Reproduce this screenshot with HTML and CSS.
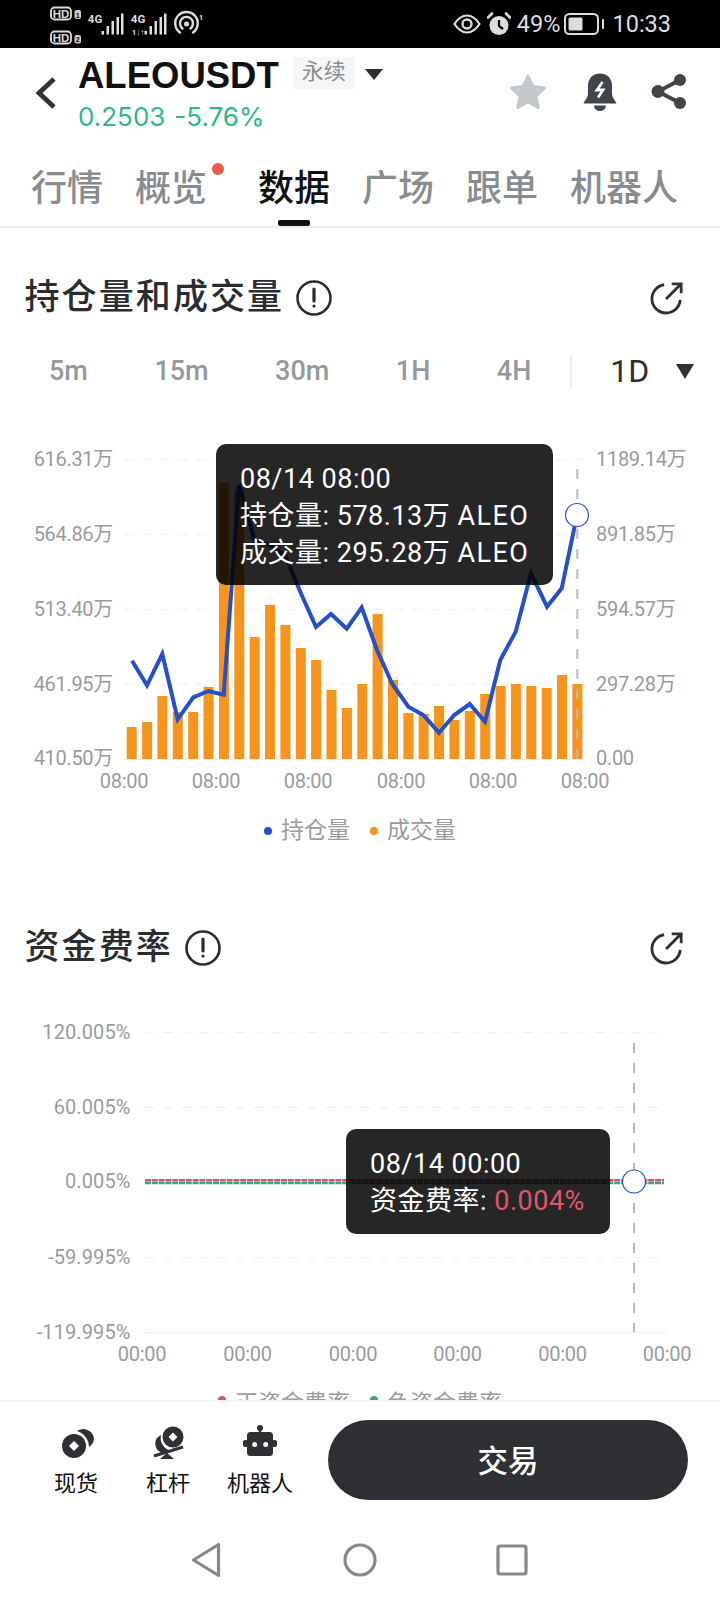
FILE: index.html
```html
<!DOCTYPE html>
<html lang="zh">
<head>
<meta charset="utf-8">
<title>ALEOUSDT</title>
<link rel="stylesheet" href="styles.css">
</head>
<body>
<div class="page">
  <div class="status">
    <svg class="status-left" viewBox="0 0 210 48" width="210" height="48">
      <rect class="hd-box" x="51" y="7.5" width="20" height="12" rx="3.5"/>
      <text class="hd" x="61" y="17.7">HD</text>
      <rect class="sim" x="74.5" y="10" width="6.5" height="9" rx="2"/>
      <text class="sim-n" x="77.7" y="17.5">1</text>
      <rect class="hd-box" x="51" y="31.5" width="20" height="12" rx="3.5"/>
      <text class="hd" x="61" y="41.7">HD</text>
      <rect class="sim" x="74.5" y="35" width="6.5" height="8.5" rx="2"/>
      <text class="sim-n" x="77.7" y="42">2</text>
      <text class="net" x="95" y="23">4G</text>
      <rect class="sig" x="101.500" y="31" width="2.500" height="3.500"/>
      <rect class="sig" x="106.500" y="26" width="2.500" height="8.500"/>
      <rect class="sig" x="111.500" y="21" width="2.500" height="13.500"/>
      <rect class="sig" x="116.500" y="17" width="2.500" height="17.500"/>
      <rect class="sig" x="121" y="13.500" width="2.500" height="21"/>
      <text class="net" x="138" y="23">4G</text>
      <text class="net-s" x="138" y="34.500">1↓↑</text>
      <rect class="sig" x="144.500" y="31" width="2.500" height="3.500"/>
      <rect class="sig" x="149.500" y="26" width="2.500" height="8.500"/>
      <rect class="sig" x="154.500" y="21" width="2.500" height="13.500"/>
      <rect class="sig" x="159.500" y="17" width="2.500" height="17.500"/>
      <rect class="sig" x="164" y="13.500" width="2.500" height="21"/>
      <path class="arc" d="M180 32.500 A11.300 11.300 0 1 1 193 32.500"/>
      <path class="arc" d="M182.500 28.500 A6.500 6.500 0 1 1 190.500 28.500"/>
      <circle class="sig" cx="186.500" cy="24" r="2.500"/>
      <text class="net-s" x="201" y="20">1</text>
    </svg>
    <div class="status-right">
      <svg class="st-eye" viewBox="0 0 28 20" width="28" height="20">
        <path class="eye" d="M1.500 10 C6 3 10 1.500 14 1.500 C18 1.500 22 3 26.500 10 C22 17 18 18.500 14 18.500 C10 18.500 6 17 1.500 10 Z"/>
        <circle class="eye-ring" cx="14" cy="10" r="4.500"/>
      </svg>
      <svg class="st-alarm" viewBox="0 0 24 24" width="24" height="24">
        <circle class="alarm" cx="12" cy="13.500" r="9.500"/>
        <path class="alarm-hand" d="M12 8 V14 L16 17"/>
        <path class="alarm-ear" d="M1 5.500 L5 1.500 M23 5.500 L19 1.500"/>
      </svg>
      <span class="st-pct">49%</span>
      <svg class="st-batt" viewBox="0 0 42 22" width="42" height="22">
        <rect class="batt" x="1" y="1" width="33" height="20" rx="4.500"/>
        <rect class="batt-fill" x="4.500" y="4.500" width="14" height="13" rx="1.500"/>
        <rect class="batt-fill" x="38" y="6" width="2" height="10" rx="1"/>
      </svg>
      <span class="st-time">10:33</span>
    </div>
  </div>

  <main class="main">
    <header class="header">
      <svg class="back" viewBox="0 0 24 34" width="24" height="34"><path d="M20 3 L5 17 L20 31"/></svg>
      <div class="sym">
        <div class="sym-top">
          <span class="sym-name">ALEOUSDT</span>
          <span class="badge">永续</span>
          <span class="caret-sm"></span>
        </div>
        <div class="sym-price"><span>0.2503</span><span>-5.76%</span></div>
      </div>
      <div class="actions">
        <svg class="a-star" viewBox="0 0 40 38" width="40" height="38"><path d="M20 3 L25 13.500 L36.500 15 L28 23 L30.200 34.500 L20 29 L9.800 34.500 L12 23 L3.500 15 L15 13.500 Z"/></svg>
        <svg class="a-bell" viewBox="0 0 34 38" width="34" height="38">
          <path class="bell" d="M17 0.500 C9 0.500 5 6.500 5 13 V20 C5 25 2 27 0.500 30.500 H33.500 C32 27 29 25 29 20 V13 C29 6.500 25 0.500 17 0.500 Z"/>
          <path class="bell" d="M11 32.500 H23 A6 5.500 0 0 1 11 32.500 Z"/>
          <path class="bolt" d="M19.500 9 L14 17 H20 L15 24.500"/>
        </svg>
        <svg class="a-share" viewBox="0 0 36 38" width="36" height="38">
          <path class="share-l" d="M29 7 L7 18.500 L29 30"/>
          <circle class="share-c" cx="29" cy="7" r="6"/>
          <circle class="share-c" cx="7" cy="18.500" r="6.500"/>
          <circle class="share-c" cx="29" cy="30" r="6"/>
        </svg>
      </div>
    </header>

    <nav class="tabs">
      <span class="tab">行情</span>
      <span class="tab tab-dot">概览</span>
      <span class="tab tab-on">数据</span>
      <span class="tab">广场</span>
      <span class="tab">跟单</span>
      <span class="tab">机器人</span>
    </nav>

    <section class="sec-one">
      <div class="sec-title">
        <h2>持仓量和成交量</h2>
        <svg class="info" viewBox="0 0 38 38" width="38" height="38"><circle cx="19" cy="19" r="16.500"/><path d="M19 10 V22"/><path class="info-dot" d="M19 27 V27.100"/></svg>
        <svg class="ext" viewBox="0 0 36 36" width="34" height="34"><path d="M15 4 A15 15 0 1 0 32 20"/><path d="M17 19 L32 4 M23 3 H33 V13"/></svg>
      </div>
      <div class="times">
        <span>5m</span><span>15m</span><span>30m</span><span>1H</span><span>4H</span>
        <i class="t-sep"></i>
        <span class="t-on">1D</span>
        <i class="t-caret"></i>
      </div>
      <div class="chart chart-a">
        <svg class="plot-a" viewBox="0 440 720 365" width="720" height="365">
          <path class="grid" d="M124 459.500 H586 M124 534.500 H586 M124 609.500 H586 M124 684.500 H586"/>
          <path class="grid-base" d="M124 759.500 H586"/>
          <g class="bars">
            <rect x="126.700" y="727" width="10" height="32"/>
            <rect x="142.100" y="722" width="10" height="37"/>
            <rect x="157.400" y="696" width="10" height="63"/>
            <rect x="172.800" y="712" width="10" height="47"/>
            <rect x="188.200" y="712" width="10" height="47"/>
            <rect x="203.500" y="687" width="10" height="72"/>
            <rect x="218.900" y="483" width="10" height="276"/>
            <rect x="234.300" y="490" width="10" height="269"/>
            <rect x="249.700" y="637" width="10" height="122"/>
            <rect x="265" y="605" width="10" height="154"/>
            <rect x="280.400" y="625" width="10" height="134"/>
            <rect x="295.800" y="648" width="10" height="111"/>
            <rect x="311.100" y="660" width="10" height="99"/>
            <rect x="326.500" y="690" width="10" height="69"/>
            <rect x="341.900" y="708" width="10" height="51"/>
            <rect x="357.300" y="684" width="10" height="75"/>
            <rect x="372.600" y="614" width="10" height="145"/>
            <rect x="388" y="680" width="10" height="79"/>
            <rect x="403.400" y="713" width="10" height="46"/>
            <rect x="418.700" y="714" width="10" height="45"/>
            <rect x="434.100" y="706" width="10" height="53"/>
            <rect x="449.500" y="720" width="10" height="39"/>
            <rect x="464.800" y="711" width="10" height="48"/>
            <rect x="480.200" y="694" width="10" height="65"/>
            <rect x="495.600" y="686" width="10" height="73"/>
            <rect x="510.900" y="684" width="10" height="75"/>
            <rect x="526.300" y="686" width="10" height="73"/>
            <rect x="541.700" y="688" width="10" height="71"/>
            <rect x="557" y="675" width="10" height="84"/>
            <rect x="572.400" y="684" width="10" height="75"/>
          </g>
          <path class="cross" d="M577.300 469 V759"/>
          <polyline class="oi" points="132,660.700 147,685.300 162.300,654 177.700,719.300 193.300,697.300 208.300,691 223.700,694.700 239,485 254.700,541 270,545 285.400,556 300.800,593 316,627 331,614 346.700,628.700 361.700,607.500 377,650 392.300,684 408.300,706.700 423.300,715 439,732.700 454.300,715 469.700,704 485,721.700 500.300,660 515.700,631.700 531,573.300 547,606.700 561.700,588.300 577,515"/>
          <circle class="marker" cx="577" cy="515" r="11.500"/>
          <text class="lab" x="113" y="459">616.31万</text>
          <text class="lab" x="113" y="534">564.86万</text>
          <text class="lab" x="113" y="609">513.40万</text>
          <text class="lab" x="113" y="684">461.95万</text>
          <text class="lab" x="113" y="758">410.50万</text>
          <text class="lab-r" x="596" y="459">1189.14万</text>
          <text class="lab-r" x="596" y="534">891.85万</text>
          <text class="lab-r" x="596" y="609">594.57万</text>
          <text class="lab-r" x="596" y="684">297.28万</text>
          <text class="lab-r" x="596" y="758">0.00</text>
          <text class="lab-x" x="124" y="781">08:00</text>
          <text class="lab-x" x="216" y="781">08:00</text>
          <text class="lab-x" x="308" y="781">08:00</text>
          <text class="lab-x" x="401" y="781">08:00</text>
          <text class="lab-x" x="493" y="781">08:00</text>
          <text class="lab-x" x="585" y="781">08:00</text>
        </svg>
        <div class="tip tip-a">
          <div>08/14 08:00</div>
          <div>持仓量: 578.13万 <span class="tip-unit">ALEO</span></div>
          <div>成交量: 295.28万 <span class="tip-unit">ALEO</span></div>
        </div>
      </div>
      <div class="legend legend-a">
        <span class="lg"><i class="dot dot-blue"></i>持仓量</span>
        <span class="lg"><i class="dot dot-orange"></i>成交量</span>
      </div>
    </section>

    <section class="sec-two">
      <div class="sec-title">
        <h2>资金费率</h2>
        <svg class="info" viewBox="0 0 38 38" width="38" height="38"><circle cx="19" cy="19" r="16.500"/><path d="M19 10 V22"/><path class="info-dot" d="M19 27 V27.100"/></svg>
        <svg class="ext" viewBox="0 0 36 36" width="34" height="34"><path d="M15 4 A15 15 0 1 0 32 20"/><path d="M17 19 L32 4 M23 3 H33 V13"/></svg>
      </div>
      <div class="chart chart-b">
        <svg class="plot-b" viewBox="0 1010 720 362" width="720" height="362">
          <path class="grid" d="M145 1032.500 H666 M145 1107.500 H666 M145 1257.500 H666"/>
          <path class="grid-base" d="M145 1332.500 H666"/>
          <path class="fr-red" d="M145 1180.300 H664"/>
          <path class="fr-green" d="M145 1183 H664"/>
          <path class="cross" d="M634 1043 V1332"/>
          <circle class="marker" cx="634" cy="1181.500" r="11.500"/>
          <text class="lab-f" x="130.500" y="1032">120.005%</text>
          <text class="lab-f" x="130.500" y="1107">60.005%</text>
          <text class="lab-f" x="130.500" y="1181">0.005%</text>
          <text class="lab-f" x="130.500" y="1257">-59.995%</text>
          <text class="lab-f" x="130.500" y="1332">-119.995%</text>
          <text class="lab-x" x="142" y="1354">00:00</text>
          <text class="lab-x" x="247.500" y="1354">00:00</text>
          <text class="lab-x" x="353" y="1354">00:00</text>
          <text class="lab-x" x="457.500" y="1354">00:00</text>
          <text class="lab-x" x="562.500" y="1354">00:00</text>
          <text class="lab-x" x="667" y="1354">00:00</text>
        </svg>
        <div class="tip tip-b">
          <div>08/14 00:00</div>
          <div>资金费率: <span class="tip-red">0.004%</span></div>
        </div>
      </div>
      <div class="legend legend-b">
        <span class="lg"><i class="dot dot-red"></i>正资金费率</span>
        <span class="lg"><i class="dot dot-green"></i>负资金费率</span>
      </div>
    </section>
  </main>

  <footer class="bottom">
    <div class="bar">
      <div class="act">
        <svg class="act-i" viewBox="56 1424 36 36" width="36" height="36">
          <circle class="ic" cx="72" cy="1446" r="12"/>
          <path class="ic-w" d="M72 1441 L77 1446 L72 1451 L67 1446 Z"/>
          <path class="ic" d="M75 1431 A11 11 0 0 1 92 1438 A11 11 0 0 1 87 1447 A17 17 0 0 0 75 1431 Z"/>
        </svg>
        <span>现货</span>
      </div>
      <div class="act">
        <svg class="act-i" viewBox="150 1424 36 36" width="36" height="36">
          <circle class="ic" cx="173" cy="1437" r="10.500"/>
          <path class="ic-w" d="M173 1432.500 L177.500 1437 L173 1441.500 L168.500 1437 Z"/>
          <path class="ic" d="M161 1435 A9.500 9.500 0 0 0 163 1453 L170 1450.500 A13 13 0 0 1 161 1435 Z"/>
          <path class="ic-l" d="M154 1456 L183 1447"/>
          <path class="ic" d="M167 1453 L160 1459 H174 Z"/>
        </svg>
        <span>杠杆</span>
      </div>
      <div class="act">
        <svg class="act-i" viewBox="242 1424 36 36" width="36" height="36">
          <circle class="ic" cx="260" cy="1428" r="3"/>
          <rect class="ic" x="258.800" y="1428" width="2.400" height="6"/>
          <rect class="ic" x="247" y="1432" width="26" height="24" rx="3.500"/>
          <rect class="ic" x="243" y="1440" width="34" height="7" rx="2"/>
          <circle class="ic-w" cx="254.700" cy="1444.500" r="2.500"/>
          <circle class="ic-w" cx="265.700" cy="1444.500" r="2.500"/>
        </svg>
        <span>机器人</span>
      </div>
      <button class="trade" type="button">交易</button>
    </div>
    <div class="sysnav">
      <svg class="n-back" viewBox="0 0 30 36" width="30" height="36"><path d="M27.500 2.500 V33.500 L2.500 18 Z"/></svg>
      <svg class="n-home" viewBox="0 0 34 34" width="34" height="34"><circle cx="17" cy="17" r="15"/></svg>
      <svg class="n-rec" viewBox="0 0 32 32" width="32" height="32"><rect x="2" y="2" width="28" height="28" rx="2"/></svg>
    </div>
  </footer>
</div>
</body>
</html>
```

FILE: styles.css
```css
* { box-sizing: border-box; }
html, body { margin: 0; padding: 0; background: #fff; }
body { font-family: Roboto, "Noto Sans CJK SC", sans-serif; }
.page { width: 720px; height: 1600px; display: flex; flex-direction: column; overflow: hidden; }

/* status bar */
.status { height: 48px; background: #000; display: flex; justify-content: space-between; flex: none; }
.status-left { display: block; }
.hd-box { fill: none; stroke: #ddd; stroke-width: 1.8; }
.hd { fill: #ddd; font: 700 11.500px "Liberation Sans", sans-serif; text-anchor: middle; }
.sim { fill: #ccc; }
.sim-n { fill: #000; font: 700 7px "Liberation Sans", sans-serif; text-anchor: middle; }
.net { fill: #ddd; font: 700 11.500px Roboto, sans-serif; text-anchor: middle; }
.net-s { fill: #ddd; font: 700 8px Roboto, sans-serif; text-anchor: middle; }
.sig { fill: #ddd; }
.arc { fill: none; stroke: #ddd; stroke-width: 2.4; stroke-linecap: round; }
.status-right { display: flex; align-items: center; padding-right: 49px; color: #ddd; }
.st-eye { margin-right: 6px; }
.st-alarm { margin-right: 6px; }
.st-pct { font-size: 23.500px; margin-right: 4px; }
.st-batt { margin-right: 6px; }
.st-time { font-size: 23.500px; }
.eye { fill: none; stroke: #ddd; stroke-width: 2.2; }
.eye-ring { fill: none; stroke: #ddd; stroke-width: 2.4; }
.alarm { fill: #ddd; }
.alarm-hand { fill: none; stroke: #000; stroke-width: 2.2; }
.alarm-ear { fill: none; stroke: #ddd; stroke-width: 2.6; stroke-linecap: round; }
.batt { fill: none; stroke: #ddd; stroke-width: 2; }
.batt-fill { fill: #ddd; }

.main { flex: 1; min-height: 0; overflow: hidden; }

/* header */
.header { height: 90px; display: flex; align-items: flex-start; padding-left: 34px; }
.back { margin: 28px 20px 0 0; }
.back path { fill: none; stroke: #333; stroke-width: 4.8; }
.sym { display: flex; flex-direction: column; }
.sym-top { display: flex; align-items: center; height: 44px; margin-top: 6px; }
.sym-name { font: 700 36.500px "Liberation Sans", sans-serif; color: #111; }
.badge { margin-left: 14px; height: 32px; width: 62px; background: #f5f6f7; border-radius: 3px; color: #8a8d90; font-size: 22px; line-height: 30px; text-align: center; margin-bottom: 6px; }
.caret-sm { margin: 0 0 4px 10px; width: 0; height: 0; border-left: 9px solid transparent; border-right: 9px solid transparent; border-top: 11px solid #2f3033; }
.sym-price { display: flex; gap: 9px; font: 400 26px Inter, sans-serif; color: #2fb68a; line-height: 34px; margin-top: 2px; }
.actions { margin-left: auto; display: flex; padding: 25px 33px 0 0; }
.a-star { margin-right: 35px; }
.a-star path { fill: #c4c8cb; stroke: #c4c8cb; stroke-width: 3; stroke-linejoin: round; }
.a-bell { margin-right: 34px; }
.bell { fill: #42454a; }
.bolt { fill: none; stroke: #fff; stroke-width: 2.8; }
.share-l { fill: none; stroke: #42454a; stroke-width: 4; }
.share-c { fill: #42454a; }

/* tabs */
.tabs { height: 90px; display: flex; align-items: center; gap: 32px; padding: 14px 0 0 31px; border-bottom: 2px solid #eeeff0; }
.tab { position: relative; font-size: 36px; font-weight: 500; color: #888c8f; line-height: 50px; white-space: nowrap; }
.tab-dot { margin-right: 19px; }
.tab-dot::after { content: ""; position: absolute; left: 77px; top: -1px; width: 12px; height: 12px; border-radius: 50%; background: #ee5a4a; }
.tab-on { color: #111; }
.tab-on::after { content: ""; position: absolute; left: 20px; bottom: -12px; width: 32px; height: 6px; border-radius: 2px; background: #111; }

/* sections */
.sec-title { display: flex; align-items: center; height: 46px; padding: 0 36px 0 24.500px; }
.sec-title h2 { margin: 0; font-size: 35px; font-weight: 500; letter-spacing: 2.100px; color: #2a2c30; line-height: 46px; }
.info { margin-left: 11px; }
.info circle { fill: none; stroke: #2a2c30; stroke-width: 2.6; }
.info path { fill: none; stroke: #2a2c30; stroke-width: 3.2; stroke-linecap: round; }
.ext { margin-left: auto; }
.ext path { fill: none; stroke: #2f3033; stroke-width: 3; }
.sec-one { padding-top: 47px; }
.sec-two { padding-top: 72px; }

.times { height: 50px; margin-top: 25px; display: flex; align-items: center; gap: 66.500px; padding-left: 49px; font-size: 27px; font-weight: 500; color: #95999c; }
.t-sep { width: 2px; height: 32px; background: #eeeff0; margin: 0 -28px; }
.t-on { font-size: 32px; font-weight: 400; color: #2f3033; }
.t-caret { width: 0; height: 0; margin-left: -40px; border-left: 9px solid transparent; border-right: 9px solid transparent; border-top: 15px solid #2f3033; }

.chart { position: relative; }
.chart-a { margin-top: 44px; height: 365px; }
.chart-b { margin-top: 39px; height: 362px; }
.plot-a, .plot-b { display: block; }
.grid { fill: none; stroke: #f0f1f2; stroke-width: 1.2; stroke-dasharray: 10 8; }
.grid-base { fill: none; stroke: #eeeff0; stroke-width: 1.2; }
.bars rect { fill: #f7941d; }
.cross { fill: none; stroke: #bdbdbd; stroke-width: 2; stroke-dasharray: 10 10; }
.oi { fill: none; stroke: #2650c8; stroke-width: 4; stroke-linejoin: miter; }
.marker { fill: #fff; stroke: #2650c8; stroke-width: 1.200; }
.lab, .lab-r, .lab-x, .lab-f { fill: #999b9e; font-size: 20px; dominant-baseline: central; font-family: Roboto, "Noto Sans CJK SC", sans-serif; }
.lab { text-anchor: end; letter-spacing: -0.300px; }
.lab-f { text-anchor: end; letter-spacing: 0.100px; }
.lab-r { text-anchor: start; letter-spacing: -0.300px; }
.lab-x { text-anchor: middle; letter-spacing: -0.300px; }
.fr-red { stroke: #d9536f; stroke-width: 2.500; fill: none; stroke-dasharray: 6 0.8; }
.fr-green { stroke: #3fa37f; stroke-width: 2.500; fill: none; stroke-dasharray: 6 0.8; }

.tip { position: absolute; background: rgba(0, 0, 0, 0.85); border-radius: 10px; color: #fff; font-size: 27px; line-height: 37px; padding: 17px 0 0 24px; white-space: nowrap; letter-spacing: 0.500px; }
.tip-a { left: 216px; top: 4px; width: 337px; height: 141px; }
.tip-b { left: 346px; top: 119px; width: 264px; height: 105px; }
.tip-red { color: #e0566f; }
.tip-unit { letter-spacing: 1.400px; }

.legend { display: flex; justify-content: center; gap: 20px; color: #999b9e; font-size: 23px; line-height: 48px; }
.legend-a { height: 48px; padding-top: 4px; }
.legend-b { height: 48px; padding-top: 16px; }
.lg { display: flex; align-items: center; white-space: nowrap; }
.dot { width: 8px; height: 8px; border-radius: 50%; margin-right: 9px; }
.legend-b .dot { margin-bottom: 8px; }
.dot-blue { background: #2650c8; }
.dot-orange { background: #f7941d; }
.dot-red { background: #d9536f; }
.dot-green { background: #3fa37f; }

/* bottom */
.bottom { height: 200px; flex: none; background: #fff; border-top: 1.500px solid #eeeff0; }
.bar { height: 119px; display: flex; padding-left: 30px; }
.act { width: 92px; display: flex; flex-direction: column; align-items: center; padding-top: 23px; font-size: 22px; color: #111; line-height: 30px; }
.act span { margin-top: 9px; }
.act-i { display: block; }
.ic { fill: #2f3033; }
.ic-w { fill: #fff; }
.ic-l { stroke: #2f3033; stroke-width: 3; fill: none; }
.trade { margin: 19px 0 0 22px; width: 360px; height: 80px; border: 0; border-radius: 40px; background: #2f3033; color: #fff; font: 500 30.500px Roboto, "Noto Sans CJK SC", sans-serif; padding: 0 0 3px; }
.sysnav { height: 80px; display: flex; align-items: center; gap: 122px; padding-left: 191px; }
.n-rec { margin-left: -3px; }
.n-back path { fill: none; stroke: #888; stroke-width: 3.2; stroke-linejoin: round; }
.n-home circle { fill: none; stroke: #888; stroke-width: 3.2; }
.n-rec rect { fill: none; stroke: #888; stroke-width: 3.2; }
```
